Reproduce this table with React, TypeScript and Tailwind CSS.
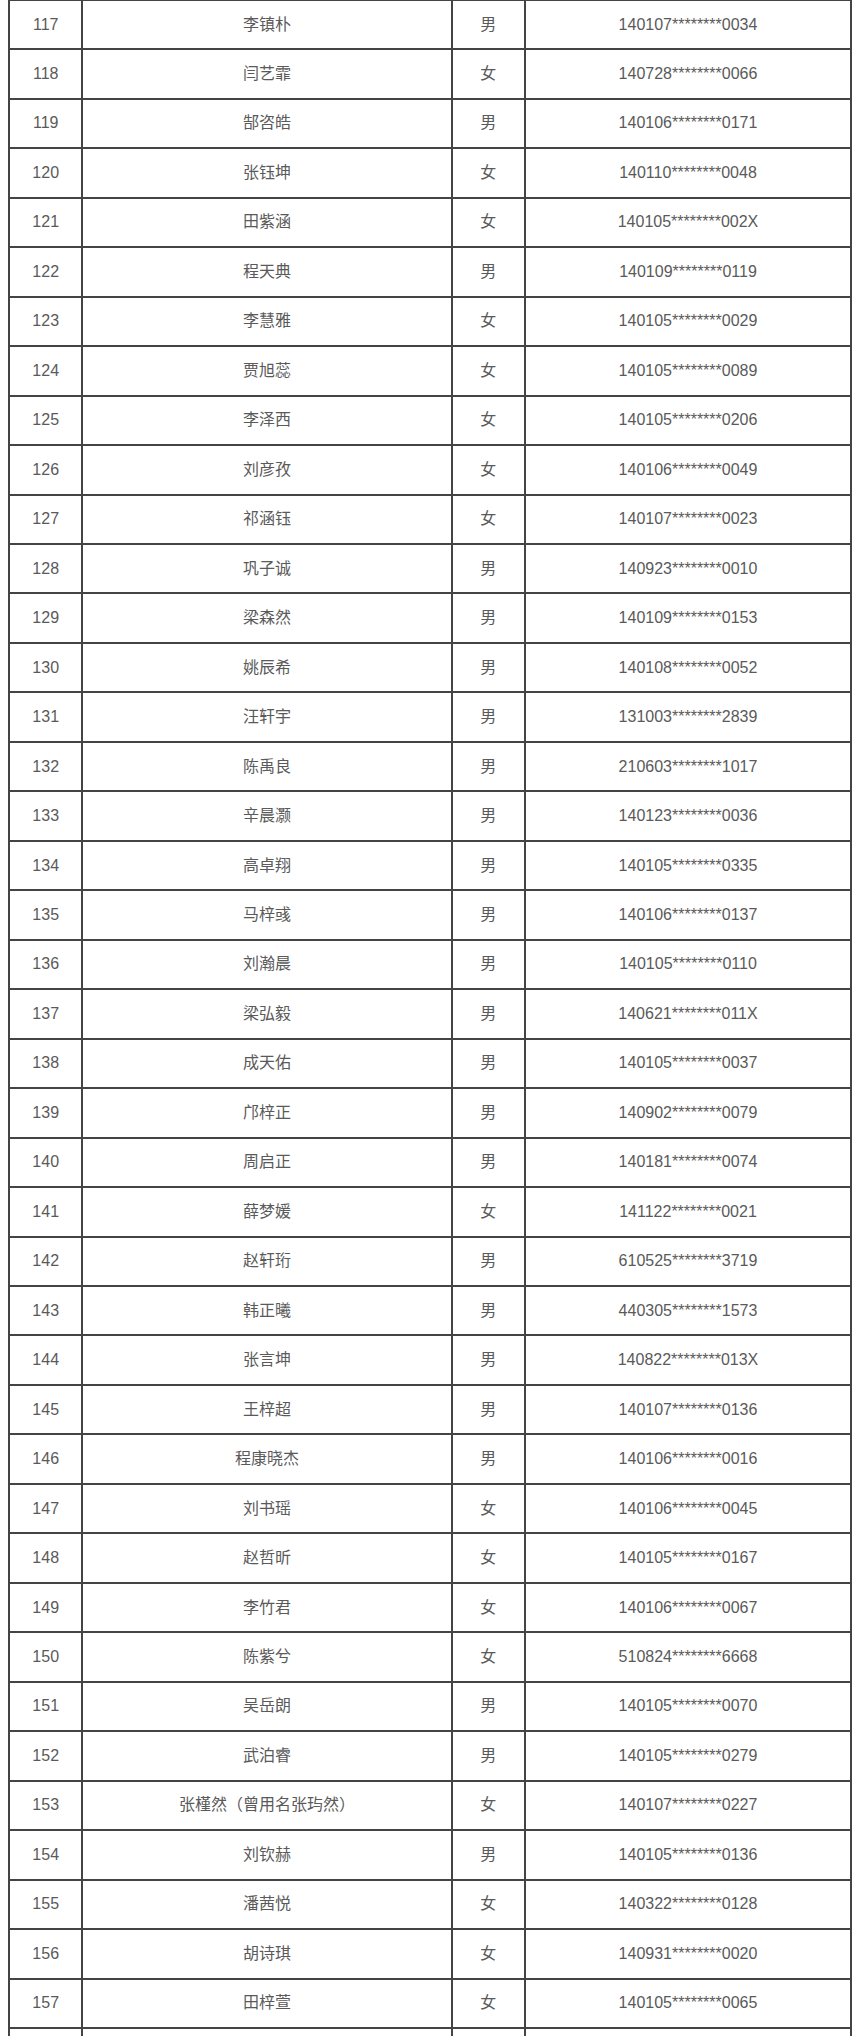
import React from "react";

const rows: [number, string, string, string][] = [
  [117, "李镇朴", "男", "140107********0034"],
  [118, "闫艺霏", "女", "140728********0066"],
  [119, "郜咨皓", "男", "140106********0171"],
  [120, "张钰坤", "女", "140110********0048"],
  [121, "田紫涵", "女", "140105********002X"],
  [122, "程天典", "男", "140109********0119"],
  [123, "李慧雅", "女", "140105********0029"],
  [124, "贾旭蕊", "女", "140105********0089"],
  [125, "李泽西", "女", "140105********0206"],
  [126, "刘彦孜", "女", "140106********0049"],
  [127, "祁涵钰", "女", "140107********0023"],
  [128, "巩子诚", "男", "140923********0010"],
  [129, "梁森然", "男", "140109********0153"],
  [130, "姚辰希", "男", "140108********0052"],
  [131, "汪轩宇", "男", "131003********2839"],
  [132, "陈禹良", "男", "210603********1017"],
  [133, "辛晨灏", "男", "140123********0036"],
  [134, "高卓翔", "男", "140105********0335"],
  [135, "马梓彧", "男", "140106********0137"],
  [136, "刘瀚晨", "男", "140105********0110"],
  [137, "梁弘毅", "男", "140621********011X"],
  [138, "成天佑", "男", "140105********0037"],
  [139, "邝梓正", "男", "140902********0079"],
  [140, "周启正", "男", "140181********0074"],
  [141, "薛梦媛", "女", "141122********0021"],
  [142, "赵轩珩", "男", "610525********3719"],
  [143, "韩正曦", "男", "440305********1573"],
  [144, "张言坤", "男", "140822********013X"],
  [145, "王梓超", "男", "140107********0136"],
  [146, "程康晓杰", "男", "140106********0016"],
  [147, "刘书瑶", "女", "140106********0045"],
  [148, "赵哲昕", "女", "140105********0167"],
  [149, "李竹君", "女", "140106********0067"],
  [150, "陈紫兮", "女", "510824********6668"],
  [151, "吴岳朗", "男", "140105********0070"],
  [152, "武泊睿", "男", "140105********0279"],
  [153, "张槿然（曾用名张玙然）", "女", "140107********0227"],
  [154, "刘钦赫", "男", "140105********0136"],
  [155, "潘茜悦", "女", "140322********0128"],
  [156, "胡诗琪", "女", "140931********0020"],
  [157, "田梓萱", "女", "140105********0065"],
];

function Cell({ children, w }: { children?: React.ReactNode; w: string }) {
  return (
    <div className={`${w} flex items-center justify-center border-r-2 border-[#444] h-full`}>
      {children}
    </div>
  );
}

export default function App() {
  return (
    <div
      className="w-[860px] h-[2036px] overflow-hidden bg-white text-[#5a5a5a] text-[16px]"
      style={{ fontFamily: '"Liberation Sans", "Noto Sans CJK SC", sans-serif' }}
    >
      <div className="ml-[8px] w-[844px] -mt-[1.2px] border-l-2 border-t-2 border-[#444]">
        {[...rows, [158, "", "", ""] as [number, string, string, string]].map(([n, name, sex, id]) => (
          <div key={n} className="flex h-[49.475px] border-b-2 border-[#444]">
            <Cell w="w-[73.4px]">{name ? n : ""}</Cell>
            <Cell w="w-[369.3px]">{name}</Cell>
            <Cell w="w-[73.3px]">{sex}</Cell>
            <Cell w="w-[326px]">{id}</Cell>
          </div>
        ))}
      </div>
    </div>
  );
}
